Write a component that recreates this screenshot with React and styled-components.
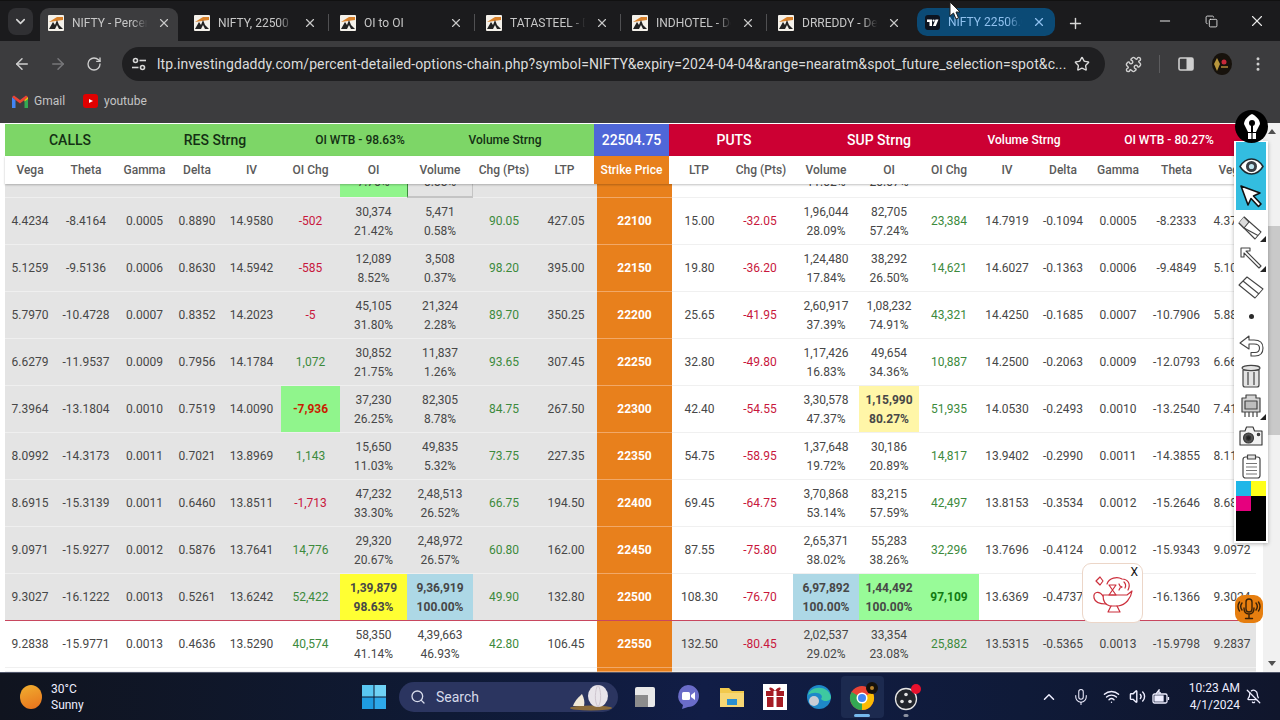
import styled, { createGlobalStyle } from 'styled-components';
import {
	ArrowLeft, ArrowRight, RotateCw, Star, Puzzle, EllipsisVertical, X, Plus, Minus, Copy,
	ChevronDown, ChevronUp, Search, Mic, Wifi, Volume2, BellOff
} from 'lucide-react';

const GlobalStyle = createGlobalStyle`
	html, body {
		margin: 0;
		padding: 0;
		background: #1b1b1d;
	}

	* {
		box-sizing: border-box;
	}
`;

const ROW_COLUMNS = '50px 62px 55px 50px 59px 59px 67px 66px 62px 62px 75px 55px 66px 66px 60px 60px 56px 56px 54px 63px 48px';
const HEAD_COLUMNS = '50px 62px 55px 50px 59px 59px 67px 66px 62px 59px 75px 60px 64px 66px 60px 60px 56px 56px 54px 63px 48px';

const Screen = styled.div`
	position: relative;
	width: 1280px;
	height: 720px;
	overflow: hidden;
	display: flex;
	flex-direction: column;
	font-family: Roboto, "Liberation Sans", sans-serif;
`;

/* browser chrome */

const TabStrip = styled.div`
	height: 41px;
	flex: none;
	display: flex;
	align-items: flex-end;
	padding-left: 8px;
	background: #1b1b1d;
	border-top: 1px solid #111;
`;

const TabSearch = styled.div`
	width: 25px;
	height: 27px;
	margin: 0 7px 6px 0;
	display: flex;
	align-items: center;
	justify-content: center;
	border-radius: 8px;
	background: #303033;
	color: #d8d8d8;
`;

const Tab = styled.div`
	position: relative;
	width: 138px;
	height: 33px;
	margin-right: 8px;
	padding: 0 7px 4px 8px;
	display: flex;
	align-items: center;
	gap: 8px;
	border-radius: 9px 9px 0 0;
	background: ${(props) => props.$active ? '#3c3c3e' : 'transparent'};
	color: #c7c7c7;

	&::after {
		content: '';
		display: ${(props) => props.$sep ? 'block' : 'none'};
		position: absolute;
		right: -5px;
		top: 6px;
		width: 1px;
		height: 17px;
		background: #505052;
	}
`;

const GroupTab = styled(Tab)`
	height: 28px;
	margin: 0 8px 5px 1px;
	padding: 0 9px 0 8px;
	border-radius: 10px;
	background: #0b4a75;
	color: #8fc0ee;
`;

const TabTitle = styled.span`
	flex: 1;
	min-width: 0;
	overflow: hidden;
	white-space: nowrap;
	font-size: 12px;
	mask-image: linear-gradient(to right, #000 78%, transparent 98%);
`;

const NewTab = styled.div`
	width: 24px;
	height: 24px;
	margin-bottom: 6px;
	display: flex;
	align-items: center;
	justify-content: center;
	color: #d8d8d8;
`;

const WindowControls = styled.div`
	margin-left: auto;
	align-self: stretch;
	display: flex;
`;

const WindowButton = styled.div`
	width: 46px;
	display: flex;
	align-items: center;
	justify-content: center;
	color: #e8e8e8;
`;

const Toolbar = styled.div`
	height: 45px;
	flex: none;
	display: flex;
	align-items: center;
	padding: 1px 0 0 4px;
	background: #3c3c3e;
`;

const ToolbarButton = styled.div`
	width: 36px;
	height: 36px;
	flex: none;
	display: flex;
	align-items: center;
	justify-content: center;
	color: ${(props) => props.$dim ? '#77777a' : '#cfcfcf'};
`;

const Address = styled.div`
	width: 983px;
	height: 34px;
	margin: 0 10px 0 10px;
	flex: none;
	display: flex;
	align-items: center;
	padding: 0 15px 0 3px;
	border-radius: 17px;
	background: #1f1f21;
	color: #dcdcdc;
`;

const SiteInfo = styled.div`
	width: 28px;
	height: 28px;
	margin-right: 4px;
	flex: none;
	display: flex;
	align-items: center;
	justify-content: center;
`;

const Url = styled.span`
	flex: 1;
	min-width: 0;
	overflow: hidden;
	white-space: nowrap;
	font-size: 14px;
	letter-spacing: 0.1px;
`;

const ToolbarSep = styled.div`
	width: 17px;
	flex: none;
	display: flex;
	justify-content: center;

	&::before {
		content: '';
		width: 1px;
		height: 18px;
		background: #5c5c5e;
	}
`;

const BookmarksBar = styled.div`
	height: 37px;
	flex: none;
	display: flex;
	align-items: center;
	gap: 18px;
	padding: 0 0 7px 12px;
	background: #3c3c3e;
`;

const Bookmark = styled.div`
	display: flex;
	align-items: center;
	gap: 6px;
	font-size: 12px;
	color: #c4c4c4;
`;

/* option chain */

const Page = styled.div`
	flex: 1;
	min-height: 0;
	display: flex;
	background: #fff;
`;

const Chain = styled.div`
	width: 1263px;
	flex: none;
	display: flex;
	flex-direction: column;
	padding: 1px 5px 0;
	overflow: hidden;
`;

const Banner = styled.div`
	height: 32px;
	flex: none;
	display: grid;
	grid-template-columns: 589px 75px 589px;
`;

const BannerSide = styled.div`
	display: grid;
	grid-template-columns: 130px 160px 130px 160px;
	align-items: center;
	text-align: center;
	font-weight: 500;
	font-size: 12px;
	background: ${(props) => props.$puts ? '#cc0033' : '#7dd667'};
	color: ${(props) => props.$puts ? '#fff' : '#143014'};
`;

const BannerTitle = styled.span`
	font-size: 14px;
`;

const SpotPrice = styled.div`
	display: flex;
	align-items: center;
	justify-content: center;
	font-size: 14px;
	font-weight: 500;
	color: #fff;
	background: #4f67d8;
`;

const HeadRow = styled.div`
	height: 28px;
	flex: none;
	display: grid;
	grid-template-columns: ${HEAD_COLUMNS};
	background: #fff;
	box-shadow: 0 1px 2px rgba(0, 0, 0, 0.25);
	position: relative;
	z-index: 1;
`;

const HeadCell = styled.div`
	display: flex;
	align-items: center;
	justify-content: center;
	white-space: nowrap;
	font-size: 12px;
	font-weight: 500;
	color: ${(props) => props.$strike ? '#fff' : '#5a5a5a'};
	background: ${(props) => props.$strike ? '#e8801c' : 'transparent'};
`;

const Row = styled.div`
	height: ${(props) => props.$height || 47}px;
	flex: none;
	display: grid;
	grid-template-columns: ${ROW_COLUMNS};
`;

const Cell = styled.div`
	display: flex;
	flex-direction: column;
	align-items: center;
	justify-content: ${(props) => props.$clipped ? 'flex-end' : 'center'};
	gap: 4px;
	min-width: 0;
	overflow: hidden;
	white-space: nowrap;
	padding: ${(props) => props.$clipped ? '0 0 7px' : '1px 0 0'};
	font-size: 12px;
	line-height: 15px;
	font-weight: ${(props) => props.$bold ? 700 : 400};
	color: ${(props) => ({ green: '#3c8a3c', red: '#c8173c', strong: '#127a12', alert: '#c81e00' }[props.$tone] || '#474747')};
	background: ${(props) => props.$fill || (props.$shade ? '#e4e4e4' : '#fff')};
	border-bottom: 1px solid ${(props) => props.$atm ? '#c8475f' : (props.$shade ? '#efefef' : '#f0f0f0')};
`;

const StrikeCell = styled(Cell)`
	font-weight: 700;
	color: #fff;
	background: #e8801c;
	border-bottom: 1px solid ${(props) => props.$atm ? '#c8475f' : '#f1a868'};
`;

const HoverCell = styled(Cell)`
	padding-bottom: 6px;
	border-right: 1px solid #c4c4c4;
	border-bottom: 2px solid #c4c4c4;
	border-left: 1px solid #3c8a3c;
`;

/* drawing tools floating on the page */

const PenButton = styled.div`
	position: absolute;
	left: 1235px;
	top: 110px;
	width: 33px;
	height: 33px;
	display: flex;
	align-items: center;
	justify-content: center;
	border-radius: 50%;
	background: #000;
	z-index: 3;
`;

const DrawBar = styled.div`
	position: absolute;
	left: 1234px;
	top: 141px;
	width: 34px;
	height: 402px;
	padding: 1px 2px 0;
	display: flex;
	flex-direction: column;
	background: #fff;
	box-shadow: 0 1px 4px rgba(0, 0, 0, 0.3);
	z-index: 2;
`;

const ActiveTools = styled.div`
	height: 68px;
	margin-bottom: 4px;
	padding-top: 9px;
	background: #33bde0;
`;

const Tool = styled.div`
	position: relative;
	height: ${(props) => props.$height || 29.4}px;
	flex: none;
	display: flex;
	align-items: center;
	justify-content: center;
	color: #2a2a2a;

	&::after {
		content: '';
		display: ${(props) => props.$sub ? 'block' : 'none'};
		position: absolute;
		right: 0;
		bottom: 1px;
		border-style: solid;
		border-width: 0 0 6px 6px;
		border-color: transparent transparent #222 transparent;
	}
`;

const Dot = styled.span`
	width: 5px;
	height: 5px;
	border-radius: 50%;
	background: #2a2a2a;
`;

const Swatches = styled.div`
	flex: 1;
	margin-bottom: 2px;
	display: grid;
	grid-template-columns: 1fr 1fr;
	grid-template-rows: 15px 15px 1fr;
	background: #000;
`;

const Swatch = styled.span`
	background: ${(props) => props.$colour};
`;

const ScrollTrack = styled.div`
	flex: 1;
	position: relative;
	display: flex;
	flex-direction: column;
	justify-content: space-between;
	align-items: center;
	padding: 2px 0 2px;
	background: #f1f1f1;
	color: #555;
`;

const ScrollThumb = styled.div`
	position: absolute;
	left: 0;
	right: 0;
	top: 103px;
	height: 209px;
	background: #c9c9c9;
`;

const Arrow = styled.span`
	width: 0;
	height: 0;
	border-left: 4px solid transparent;
	border-right: 4px solid transparent;
	border-${(props) => props.$down ? 'top' : 'bottom'}: 5px solid #505050;
	margin: 4px 0;
`;

const LampPopup = styled.div`
	position: absolute;
	left: 1082px;
	top: 563px;
	width: 61px;
	height: 60px;
	display: flex;
	align-items: center;
	justify-content: center;
	border: 1px solid #ecd6c8;
	border-radius: 9px;
	background: #fff;
	z-index: 2;
`;

const LampClose = styled.span`
	position: absolute;
	right: 4px;
	top: 1px;
	font-size: 12px;
	color: #111;
`;

const MicBadge = styled.div`
	position: absolute;
	left: 1235px;
	top: 595px;
	width: 28px;
	height: 28px;
	display: flex;
	align-items: center;
	justify-content: center;
	border-radius: 9px;
	background: #e67e0f;
	color: #3a2208;
	z-index: 2;
`;

const MouseCursor = styled.svg`
	position: absolute;
	left: 949px;
	top: 1px;
	z-index: 4;
`;

/* windows taskbar */

const Taskbar = styled.div`
	height: 48px;
	flex: none;
	display: flex;
	align-items: center;
	background: linear-gradient(to right, #10141f 0%, #0f1a35 35%, #111d46 55%, #0f1a38 80%, #10162c 100%);
	border-top: 1px solid #50566a;
	color: #eef;
`;

const Weather = styled.div`
	width: 362px;
	flex: none;
	display: flex;
	align-items: center;
	gap: 9px;
	padding-left: 20px;
	font-size: 12px;
	line-height: 16px;
`;

const Sun = styled.div`
	width: 22px;
	height: 24px;
	border-radius: 50%;
	background: linear-gradient(160deg, #f0b030, #e8701c);
`;

const SearchBox = styled.div`
	width: 219px;
	height: 30px;
	margin: 0 5px 0 13px;
	flex: none;
	display: flex;
	align-items: center;
	gap: 10px;
	padding-left: 11px;
	border-radius: 15px;
	background: #2b3560;
	font-size: 14px;
	color: #d6daea;
`;

const Garlic = styled.svg`
	margin-left: auto;
	margin-right: 5px;
`;

const TaskIcon = styled.div`
	position: relative;
	width: 43.5px;
	height: 42px;
	flex: none;
	display: flex;
	align-items: center;
	justify-content: center;
	border-radius: 4px;
	background: ${(props) => props.$active ? '#1c2a4f' : 'transparent'};

	&::after {
		content: '';
		display: ${(props) => props.$running ? 'block' : 'none'};
		position: absolute;
		bottom: 1px;
		left: 50%;
		width: ${(props) => props.$active ? 16 : 5}px;
		height: 3px;
		transform: translateX(-50%);
		border-radius: 2px;
		background: ${(props) => props.$active ? '#76b9ed' : '#8a90a0'};
	}
`;

const Tray = styled.div`
	margin-left: auto;
	display: flex;
	align-items: center;
	padding-right: 14px;
`;

const TraySlot = styled.div`
	width: ${(props) => props.$width}px;
	display: flex;
	justify-content: center;
	color: #eef;
`;

const Clock = styled.div`
	width: 67px;
	text-align: right;
	font-size: 12px;
	line-height: 17px;
	color: #eef;
`;

const Favicon = () => (
	<svg width="16" height="16" viewBox="0 0 16 16" style={{ flex: 'none' }}>
		<rect width="16" height="16" rx="1" fill="#f4f1ea" />
		<path d="M1 7 L9 2 L15 2 L15 5 L8 6 Z" fill="#d9822b" />
		<path d="M1 14 L5 7 L7 10 L9 5 L11 10 L15 14 L11 14 L9 10 L7 14 Z" fill="#222" />
	</svg>
);

const TvIcon = () => (
	<svg width="15" height="15" viewBox="0 0 15 15" style={{ flex: 'none' }}>
		<rect width="15" height="15" rx="3" fill="#0d1420" />
		<path d="M2 4.5 H7 V11 H4.5 V7 H2 Z" fill="#fff" />
		<circle cx="8.6" cy="5.6" r="1.1" fill="#fff" />
		<path d="M10.5 4.5 H13.5 L10.8 11 H7.9 Z" fill="#fff" />
	</svg>
);

const TuneIcon = () => (
	<svg width="16" height="16" viewBox="0 0 16 16" fill="none" stroke="#d8d8d8" strokeWidth="1.6">
		<circle cx="4.5" cy="4.5" r="2" />
		<path d="M8.5 4.5 H15" />
		<circle cx="11.5" cy="11.5" r="2" />
		<path d="M1 11.5 H7.5" />
	</svg>
);

const SidePanelIcon = () => (
	<svg width="16" height="16" viewBox="0 0 16 16">
		<rect x="1" y="2" width="14" height="12" rx="1.5" fill="none" stroke="#cfcfcf" strokeWidth="1.6" />
		<rect x="8.5" y="2" width="6.5" height="12" fill="#cfcfcf" />
	</svg>
);

const AvatarIcon = () => (
	<svg width="20" height="24" viewBox="0 0 20 24">
		<ellipse cx="10" cy="12" rx="10" ry="11" fill="#17120c" />
		<path d="M5 6 L8 12 L5 19 L2 12 Z" fill="#b8963c" />
		<circle cx="12" cy="10" r="2.5" fill="#c8283a" />
		<rect x="9" y="14" width="7" height="2" fill="#8a6a2c" />
	</svg>
);

const GmailIcon = () => (
	<svg width="16" height="13" viewBox="0 0 16 13">
		<path d="M0 2 V13 H3.5 V5 Z" fill="#4285f4" />
		<path d="M12.5 5 V13 H16 V2 Z" fill="#34a853" />
		<path d="M0 2 L2 0.5 L8 5 L14 0.5 L16 2 L12.5 5 L8 8.5 L3.5 5 Z" fill="#ea4335" />
		<path d="M12.5 5 L16 2 V4 L12.5 6.5 Z" fill="#fbbc04" />
	</svg>
);

const YoutubeIcon = () => (
	<svg width="15" height="14" viewBox="0 0 15 14">
		<rect width="15" height="14" rx="3" fill="#e00000" />
		<path d="M6 5 L10 7 L6 9 Z" fill="#fff" />
	</svg>
);

const PenIcon = () => (
	<svg width="20" height="26" viewBox="0 0 20 26" fill="#fff">
		<path d="M10 0 C6 2 2 6 2 10 L6 18 H14 L18 10 C18 6 14 2 10 0 Z" />
		<circle cx="10" cy="9" r="3" fill="#000" />
		<rect x="9" y="11" width="2" height="7" fill="#000" />
		<rect x="6" y="19" width="3.4" height="6" />
		<rect x="10.6" y="19" width="3.4" height="6" />
	</svg>
);

const EyeIcon = () => (
	<svg width="25" height="17" viewBox="0 0 25 17">
		<path d="M1 8.5 C5 2 9 1 12.5 1 C16 1 20 2 24 8.5 C20 15 16 16 12.5 16 C9 16 5 15 1 8.5 Z" fill="#fff" stroke="#1c2a30" strokeWidth="1.5" />
		<circle cx="12.5" cy="8.5" r="5.5" fill="#3a3f46" />
		<circle cx="12.5" cy="8.5" r="2.6" fill="#bfe4ef" />
	</svg>
);

const CursorIcon = () => (
	<svg width="24" height="24" viewBox="0 0 24 24">
		<path d="M2 2 L21 9 L14.5 12 L22 20 L19.5 22.5 L12 14.5 L9 21 Z" fill="#fff" stroke="#111" strokeWidth="1.6" strokeLinejoin="round" />
	</svg>
);

const MarkerIcon = () => (
	<svg width="26" height="26" viewBox="0 0 26 26" fill="#fff" stroke="#444" strokeWidth="1.1" strokeLinejoin="round">
		<path d="M1 7 L6 1 L23 16 L17 23 Z" />
		<path d="M1 7 L6 12 L11 6 L6 1" fill="#dcdcdc" />
		<path d="M6 12 L20 19.5" />
	</svg>
);

const ArrowToolIcon = () => (
	<svg width="24" height="24" viewBox="0 0 24 24" fill="#fff" stroke="#444" strokeWidth="1.1" strokeLinejoin="round">
		<path d="M2 2 H11 V5 H7 L22 20 L20 22 L5 7 V11 H2 Z" />
	</svg>
);

const EraserIcon = () => (
	<svg width="26" height="24" viewBox="0 0 26 24" fill="#fff" stroke="#444" strokeWidth="1.1" strokeLinejoin="round">
		<path d="M1 10 L9 2 L25 14 L17 23 Z" />
		<path d="M5 6 L21 19" />
	</svg>
);

const UndoIcon = () => (
	<svg width="25" height="22" viewBox="0 0 25 22" fill="#fff" stroke="#444" strokeWidth="1.1" strokeLinejoin="round">
		<path d="M1 8 L10 1 V5 H15 C21 5 24 8 24 13 C24 18 21 21 16 21 H12 V17.5 H16 C19 17.5 20.5 15.5 20.5 13 C20.5 10 19 9 15 9 H10 V14 Z" />
	</svg>
);

const TrashIcon = () => (
	<svg width="20" height="24" viewBox="0 0 20 24" fill="#e4e4e4" stroke="#444" strokeWidth="1.2" strokeLinejoin="round">
		<path d="M2 6 H18 V21 Q18 23 16 23 H4 Q2 23 2 21 Z" />
		<ellipse cx="10" cy="4" rx="9" ry="2.6" />
		<path d="M7 8 V21 M13 8 V21" fill="none" />
	</svg>
);

const MagnetIcon = () => (
	<svg width="22" height="24" viewBox="0 0 22 24" fill="#d4d4d4" stroke="#444" strokeWidth="1.2" strokeLinejoin="round">
		<path d="M2 4 H6 V1 H16 V4 H20 V18 H2 Z" />
		<path d="M5 18 V23 M9 18 V23 M13 18 V23 M17 18 V23" fill="none" />
		<rect x="5" y="7" width="12" height="8" fill="#bdbdbd" />
	</svg>
);

const CameraIcon = () => (
	<svg width="24" height="20" viewBox="0 0 24 20" fill="#f2f2f2" stroke="#333" strokeWidth="1.1" strokeLinejoin="round">
		<path d="M1 5 H6 L7.5 1 H14 L15.5 5 H23 V19 H1 Z" />
		<circle cx="9.5" cy="12" r="5" fill="#555" />
		<circle cx="9.5" cy="12" r="2.2" fill="#222" />
		<circle cx="19.5" cy="8.5" r="1.2" fill="#444" />
	</svg>
);

const ClipboardIcon = () => (
	<svg width="19" height="25" viewBox="0 0 19 25" fill="#fff" stroke="#444" strokeWidth="1.2" strokeLinejoin="round">
		<rect x="1" y="3" width="17" height="21" rx="2.5" />
		<rect x="5.5" y="1" width="8" height="4" fill="#e4e4e4" />
		<path d="M4 9.5 H15 M4 13 H15 M4 16.5 H15 M4 20 H15" stroke="#777" fill="none" />
	</svg>
);

const LampIcon = () => (
	<svg width="44" height="44" viewBox="0 0 44 44" fill="none" stroke="#cc2f3c" strokeWidth="1.2" strokeLinejoin="round" strokeLinecap="round">
		<path d="M12 24 H36 L41 20 C40 27 35 34 27 35 H19 C14 34 12 29 12 24 Z" />
		<path d="M12 25 C8 19 2 21 3 27 C4 31 9 33 15 33" />
		<path d="M20 35 L17 41 H29 L26 35 M17 41 H29" />
		<path d="M18 14 H25 L21.5 19 L25 24 H18 L21.5 19 Z" />
		<path d="M16 13 C18 7 26 5 31 8 C37 8 40 13 37 19" />
		<path d="M9 6 L12 10 L9 14 L5 10 Z" />
		<path d="M28 13 L29 15 L31 16 L29 17 L28 19 M33 11 C35 13 35 15 34 17" />
	</svg>
);

const BadgeMicIcon = () => (
	<svg width="24" height="24" viewBox="0 0 24 24" fill="none" stroke="currentColor" strokeWidth="1.4" strokeLinecap="round">
		<rect x="9" y="2" width="6" height="13" rx="3" />
		<path d="M7 11 C7 15 9 17 12 17 C15 17 17 15 17 11 M12 17 V21 M8.5 21.5 H15.5" />
		<path d="M5 6 C3.5 8 3.5 11 5 13 M19 6 C20.5 8 20.5 11 19 13 M2.5 5 C0.5 8 0.5 11 2.5 14 M21.5 5 C23.5 8 23.5 11 21.5 14" />
	</svg>
);

const WindowsLogo = () => (
	<svg width="24" height="24" viewBox="0 0 24 24" style={{ flex: 'none' }}>
		<rect width="11.5" height="11.5" fill="#59c7f2" />
		<rect x="12.5" width="11.5" height="11.5" fill="#6fd2f5" />
		<rect y="12.5" width="11.5" height="11.5" fill="#1e9be0" />
		<rect x="12.5" y="12.5" width="11.5" height="11.5" fill="#2ea9ea" />
	</svg>
);

const GarlicIcon = () => (
	<Garlic width="46" height="30" viewBox="0 0 46 30">
		<ellipse cx="24" cy="26" rx="21" ry="2.6" fill="#8a6a3a" />
		<ellipse cx="31" cy="14" rx="10" ry="11" fill="#e8e4ea" />
		<path d="M31 3 C28 7 27 20 31 25 M31 3 C34 7 35 20 31 25" fill="none" stroke="#cfc6d0" />
		<path d="M6 24 C8 18 13 14 15 12 C17 16 18 20 17 24 Z" fill="#f0e8d8" />
	</Garlic>
);

const FilesIcon = () => (
	<svg width="22" height="24" viewBox="0 0 22 24">
		<rect x="1" y="2" width="20" height="20" rx="2" fill="#e8e8e8" />
		<rect x="1" y="10" width="13" height="12" fill="#8c8c8c" />
	</svg>
);

const MeetIcon = () => (
	<svg width="24" height="26" viewBox="0 0 24 26">
		<path d="M12 1 A11 11 0 1 1 12 23 L6 25 L7 21 A11 11 0 0 1 12 1 Z" fill="#6a6cc8" />
		<rect x="6" y="8" width="8" height="8" rx="1.5" fill="#fff" />
		<path d="M15 11 L19 8 V16 L15 13 Z" fill="#fff" />
	</svg>
);

const FolderIcon = () => (
	<svg width="26" height="24" viewBox="0 0 26 24">
		<path d="M1 3 H10 L13 6 H25 V22 H1 Z" fill="#f2c94c" />
		<rect x="1" y="8" width="24" height="14" fill="#f7d774" />
		<rect x="8" y="14" width="10" height="6" fill="#2a8fd0" />
	</svg>
);

const GiftIcon = () => (
	<svg width="24" height="26" viewBox="0 0 24 26">
		<rect width="24" height="26" fill="#fff" />
		<rect x="3" y="7" width="18" height="5" fill="#a51c24" />
		<rect x="4" y="13" width="16" height="10" fill="#a51c24" />
		<rect x="10.5" y="7" width="3" height="16" fill="#fff" />
		<path d="M12 7 C8 1 4 4 8 7 Z M12 7 C16 1 20 4 16 7 Z" fill="#a51c24" />
	</svg>
);

const EdgeIcon = () => (
	<svg width="26" height="26" viewBox="0 0 26 26">
		<circle cx="13" cy="13" r="12" fill="#1e88c8" />
		<path d="M2 11 C4 2 22 0 25 13 C25 18 17 18 15 15 C19 10 9 6 2 11 Z" fill="#3ec9a0" />
		<circle cx="8" cy="17" r="5" fill="#c8ccd4" />
	</svg>
);

const ChromeIcon = () => (
	<svg width="32" height="32" viewBox="0 0 32 32">
		<circle cx="16" cy="17" r="12" fill="#ea4335" />
		<path d="M16 17 L5.6 11 A12 12 0 0 0 16 29 Z" fill="#34a853" />
		<path d="M16 17 L26.4 11 A12 12 0 0 1 16 29 Z" fill="#fbbc04" />
		<circle cx="16" cy="17" r="5.5" fill="#fff" />
		<circle cx="16" cy="17" r="4" fill="#4285f4" />
		<circle cx="26" cy="7" r="6" fill="#15110c" />
		<circle cx="26" cy="7" r="2" fill="#b8822c" />
	</svg>
);

const ObsIcon = () => (
	<svg width="30" height="28" viewBox="0 0 30 28">
		<circle cx="15" cy="16" r="10.5" fill="#22252c" stroke="#e4e4e4" strokeWidth="1.3" />
		<circle cx="15" cy="11.5" r="1.8" fill="#e4e4e4" />
		<circle cx="11" cy="18.5" r="1.8" fill="#e4e4e4" />
		<circle cx="19" cy="18.5" r="1.8" fill="#e4e4e4" />
		<circle cx="25" cy="6" r="5" fill="#e8112d" />
	</svg>
);

const BatteryIcon = () => (
	<svg width="18" height="16" viewBox="0 0 18 16" fill="none" stroke="#eef" strokeWidth="1.3">
		<rect x="1" y="5" width="14" height="9" rx="1.5" />
		<rect x="3" y="7" width="8" height="5" fill="#eef" />
		<path d="M16.5 8 V11 M4 5 L7 1 V4 H9" />
	</svg>
);

const rows = [
	{ strike: '22100', call: ['4.4234', '-8.4164', '0.0005', '0.8890', '14.9580'], cChg: '-502', cOi: ['30,374', '21.42%'], cVol: ['5,471', '0.58%'], cPts: '90.05', cLtp: '427.05', pLtp: '15.00', pPts: '-32.05', pVol: ['1,96,044', '28.09%'], pOi: ['82,705', '57.24%'], pChg: '23,384', put: ['14.7919', '-0.1094', '0.0005', '-8.2333', '4.3708'] },
	{ strike: '22150', call: ['5.1259', '-9.5136', '0.0006', '0.8630', '14.5942'], cChg: '-585', cOi: ['12,089', '8.52%'], cVol: ['3,508', '0.37%'], cPts: '98.20', cLtp: '395.00', pLtp: '19.80', pPts: '-36.20', pVol: ['1,24,480', '17.84%'], pOi: ['38,292', '26.50%'], pChg: '14,621', put: ['14.6027', '-0.1363', '0.0006', '-9.4849', '5.1016'] },
	{ strike: '22200', call: ['5.7970', '-10.4728', '0.0007', '0.8352', '14.2023'], cChg: '-5', cOi: ['45,105', '31.80%'], cVol: ['21,324', '2.28%'], cPts: '89.70', cLtp: '350.25', pLtp: '25.65', pPts: '-41.95', pVol: ['2,60,917', '37.39%'], pOi: ['1,08,232', '74.91%'], pChg: '43,321', put: ['14.4250', '-0.1685', '0.0007', '-10.7906', '5.8812'] },
	{ strike: '22250', call: ['6.6279', '-11.9537', '0.0009', '0.7956', '14.1784'], cChg: '1,072', cOi: ['30,852', '21.75%'], cVol: ['11,837', '1.26%'], cPts: '93.65', cLtp: '307.45', pLtp: '32.80', pPts: '-49.80', pVol: ['1,17,426', '16.83%'], pOi: ['49,654', '34.36%'], pChg: '10,887', put: ['14.2500', '-0.2063', '0.0009', '-12.0793', '6.6604'] },
	{ strike: '22300', call: ['7.3964', '-13.1804', '0.0010', '0.7519', '14.0090'], cChg: '-7,936', cChgFill: '#90f58c', cOi: ['37,230', '26.25%'], cVol: ['82,305', '8.78%'], cPts: '84.75', cLtp: '267.50', pLtp: '42.40', pPts: '-54.55', pVol: ['3,30,578', '47.37%'], pOi: ['1,15,990', '80.27%'], pOiFill: '#fff6a8', pChg: '51,935', put: ['14.0530', '-0.2493', '0.0010', '-13.2540', '7.4122'] },
	{ strike: '22350', call: ['8.0992', '-14.3173', '0.0011', '0.7021', '13.8969'], cChg: '1,143', cOi: ['15,650', '11.03%'], cVol: ['49,835', '5.32%'], cPts: '73.75', cLtp: '227.35', pLtp: '54.75', pPts: '-58.95', pVol: ['1,37,648', '19.72%'], pOi: ['30,186', '20.89%'], pChg: '14,817', put: ['13.9402', '-0.2990', '0.0011', '-14.3855', '8.1103'] },
	{ strike: '22400', call: ['8.6915', '-15.3139', '0.0011', '0.6460', '13.8511'], cChg: '-1,713', cOi: ['47,232', '33.30%'], cVol: ['2,48,513', '26.52%'], cPts: '66.75', cLtp: '194.50', pLtp: '69.45', pPts: '-64.75', pVol: ['3,70,868', '53.14%'], pOi: ['83,215', '57.59%'], pChg: '42,497', put: ['13.8153', '-0.3534', '0.0012', '-15.2646', '8.6807'] },
	{ strike: '22450', call: ['9.0971', '-15.9277', '0.0012', '0.5876', '13.7641'], cChg: '14,776', cOi: ['29,320', '20.67%'], cVol: ['2,48,972', '26.57%'], cPts: '60.80', cLtp: '162.00', pLtp: '87.55', pPts: '-75.80', pVol: ['2,65,371', '38.02%'], pOi: ['55,283', '38.26%'], pChg: '32,296', put: ['13.7696', '-0.4124', '0.0012', '-15.9343', '9.0972'] },
	{ strike: '22500', atm: true, call: ['9.3027', '-16.1222', '0.0013', '0.5261', '13.6242'], cChg: '52,422', cOi: ['1,39,879', '98.63%'], cOiFill: '#ffff33', cVol: ['9,36,919', '100.00%'], cVolFill: '#add8e6', cPts: '49.90', cLtp: '132.80', pLtp: '108.30', pPts: '-76.70', pVol: ['6,97,892', '100.00%'], pVolFill: '#add8e6', pOi: ['1,44,492', '100.00%'], pOiFill: '#98fb98', pChg: '97,109', pChgFill: '#98fb98', put: ['13.6369', '-0.4737', '0.0013', '-16.1366', '9.3024'] },
	{ strike: '22550', call: ['9.2838', '-15.9771', '0.0013', '0.4636', '13.5290'], cChg: '40,574', cOi: ['58,350', '41.14%'], cVol: ['4,39,663', '46.93%'], cPts: '42.80', cLtp: '106.45', pLtp: '132.50', pPts: '-80.45', pVol: ['2,02,537', '29.02%'], pOi: ['33,354', '23.08%'], pChg: '25,882', put: ['13.5315', '-0.5365', '0.0013', '-15.9798', '9.2837'] }
];

const callHeads = ['Vega', 'Theta', 'Gamma', 'Delta', 'IV', 'OI Chg', 'OI', 'Volume', 'Chg (Pts)', 'LTP'];
const putHeads = ['LTP', 'Chg (Pts)', 'Volume', 'OI', 'OI Chg', 'IV', 'Delta', 'Gamma', 'Theta', 'Vega'];
const tabs = ['NIFTY - Percent Detailed', 'NIFTY, 22500', 'OI to OI', 'TATASTEEL - Detail', 'INDHOTEL - Detail', 'DRREDDY - Detail'];

const toneOf = (value) => (value.startsWith('-') ? 'red' : 'green');

const Pair = ({ value }) => (
	<>
		<span>{value[0]}</span>
		<span>{value[1]}</span>
	</>
);

const ChainRow = ({ data }) => {
	const { strike, atm } = data;
	const itmCall = Number(strike) <= 22500;
	const call = { $shade: itmCall, $atm: atm };
	const put = { $shade: !itmCall, $atm: atm };

	return (
		<Row>
			{data.call.map((value, i) => <Cell key={i} {...call}>{value}</Cell>)}
			<Cell
				{...call}
				$fill={data.cChgFill}
				$bold={!!data.cChgFill}
				$tone={data.cChgFill ? 'alert' : toneOf(data.cChg)}
			>
				{data.cChg}
			</Cell>
			<Cell {...call} $fill={data.cOiFill} $bold={!!data.cOiFill}><Pair value={data.cOi} /></Cell>
			<Cell {...call} $fill={data.cVolFill} $bold={!!data.cVolFill}><Pair value={data.cVol} /></Cell>
			<Cell {...call} $tone="green">{data.cPts}</Cell>
			<Cell {...call}>{data.cLtp}</Cell>
			<StrikeCell $atm={atm}>{strike}</StrikeCell>
			<Cell {...put}>{data.pLtp}</Cell>
			<Cell {...put} $tone="red">{data.pPts}</Cell>
			<Cell {...put} $fill={data.pVolFill} $bold={!!data.pVolFill}><Pair value={data.pVol} /></Cell>
			<Cell {...put} $fill={data.pOiFill} $bold={!!data.pOiFill}><Pair value={data.pOi} /></Cell>
			<Cell {...put} $fill={data.pChgFill} $bold={!!data.pChgFill} $tone={data.pChgFill ? 'strong' : 'green'}>{data.pChg}</Cell>
			{data.put.map((value, i) => <Cell key={i} {...put}>{value}</Cell>)}
		</Row>
	);
};

// the row the table has scrolled past, only its last line still shows
const ClippedRow = () => (
	<Row $height={14}>
		{callHeads.map((head, i) => {
			if (head === 'OI') return <Cell key={i} $clipped $fill="#90f58c">7.76%</Cell>;
			if (head === 'Volume') return <HoverCell key={i} $clipped $shade>0.55%</HoverCell>;
			return <Cell key={i} $shade />;
		})}
		<StrikeCell />
		{putHeads.map((head, i) => {
			if (head === 'Volume') return <Cell key={i} $clipped>11.02%</Cell>;
			if (head === 'OI') return <Cell key={i} $clipped>20.07%</Cell>;
			return <Cell key={i} />;
		})}
	</Row>
);

const TailRow = () => (
	<Row $height={4}>
		{callHeads.map((head, i) => <Cell key={i} />)}
		<StrikeCell />
		{putHeads.map((head, i) => <Cell key={i} $shade />)}
	</Row>
);

const App = () => (
	<Screen>
		<GlobalStyle />

		<TabStrip>
			<TabSearch><ChevronDown size={15} strokeWidth={2.5} /></TabSearch>
			{tabs.map((title, i) => (
				<Tab key={title} $active={i === 0} $sep={i > 0 && i < 5}>
					<Favicon />
					<TabTitle>{title}</TabTitle>
					<X size={14} strokeWidth={2} />
				</Tab>
			))}
			<GroupTab>
				<TvIcon />
				<TabTitle>NIFTY 22506.05</TabTitle>
				<X size={14} strokeWidth={2} />
			</GroupTab>
			<NewTab><Plus size={17} /></NewTab>
			<WindowControls>
				<WindowButton><Minus size={16} strokeWidth={1.5} /></WindowButton>
				<WindowButton><Copy size={13} strokeWidth={1.6} /></WindowButton>
				<WindowButton><X size={18} strokeWidth={1.5} /></WindowButton>
			</WindowControls>
		</TabStrip>

		<Toolbar>
			<ToolbarButton><ArrowLeft size={18} /></ToolbarButton>
			<ToolbarButton $dim><ArrowRight size={18} /></ToolbarButton>
			<ToolbarButton><RotateCw size={16} /></ToolbarButton>
			<Address>
				<SiteInfo><TuneIcon /></SiteInfo>
				<Url>ltp.investingdaddy.com/percent-detailed-options-chain.php?symbol=NIFTY&amp;expiry=2024-04-04&amp;range=nearatm&amp;spot_future_selection=spot&amp;c...</Url>
				<Star size={16} color="#dcdcdc" strokeWidth={2} />
			</Address>
			<ToolbarButton><Puzzle size={17} /></ToolbarButton>
			<ToolbarSep />
			<ToolbarButton><SidePanelIcon /></ToolbarButton>
			<ToolbarButton><AvatarIcon /></ToolbarButton>
			<ToolbarButton><EllipsisVertical size={18} /></ToolbarButton>
		</Toolbar>

		<BookmarksBar>
			<Bookmark><GmailIcon />Gmail</Bookmark>
			<Bookmark><YoutubeIcon />youtube</Bookmark>
		</BookmarksBar>

		<Page>
			<Chain>
				<Banner>
					<BannerSide>
						<BannerTitle>CALLS</BannerTitle>
						<BannerTitle>RES Strng</BannerTitle>
						<span>OI WTB - 98.63%</span>
						<span>Volume Strng</span>
					</BannerSide>
					<SpotPrice>22504.75</SpotPrice>
					<BannerSide $puts>
						<BannerTitle>PUTS</BannerTitle>
						<BannerTitle>SUP Strng</BannerTitle>
						<span>Volume Strng</span>
						<span>OI WTB - 80.27%</span>
					</BannerSide>
				</Banner>
				<HeadRow>
					{callHeads.map((head) => <HeadCell key={head}>{head}</HeadCell>)}
					<HeadCell $strike>Strike Price</HeadCell>
					{putHeads.map((head) => <HeadCell key={head}>{head}</HeadCell>)}
				</HeadRow>
				<ClippedRow />
				{rows.map((row) => <ChainRow key={row.strike} data={row} />)}
				<TailRow />
			</Chain>
			<ScrollTrack>
				<ScrollThumb />
				<Arrow />
				<Arrow $down />
			</ScrollTrack>
		</Page>

		<Taskbar>
			<Weather>
				<Sun />
				<div>30°C<br />Sunny</div>
			</Weather>
			<WindowsLogo />
			<SearchBox>
				<Search size={16} />
				Search
				<GarlicIcon />
			</SearchBox>
			<TaskIcon><FilesIcon /></TaskIcon>
			<TaskIcon><MeetIcon /></TaskIcon>
			<TaskIcon><FolderIcon /></TaskIcon>
			<TaskIcon><GiftIcon /></TaskIcon>
			<TaskIcon><EdgeIcon /></TaskIcon>
			<TaskIcon $active $running><ChromeIcon /></TaskIcon>
			<TaskIcon $running><ObsIcon /></TaskIcon>
			<Tray>
				<TraySlot $width={32}><ChevronUp size={18} /></TraySlot>
				<TraySlot $width={32}><Mic size={18} strokeWidth={1.4} /></TraySlot>
				<TraySlot $width={28}><Wifi size={17} /></TraySlot>
				<TraySlot $width={24}><Volume2 size={17} /></TraySlot>
				<TraySlot $width={24}><BatteryIcon /></TraySlot>
				<Clock>10:23 AM<br />4/1/2024</Clock>
				<TraySlot $width={26}><BellOff size={15} /></TraySlot>
			</Tray>
		</Taskbar>

		<PenButton><PenIcon /></PenButton>
		<DrawBar>
			<ActiveTools>
				<Tool $height={30}><EyeIcon /></Tool>
				<Tool $height={30}><CursorIcon /></Tool>
			</ActiveTools>
			<Tool $sub><MarkerIcon /></Tool>
			<Tool $sub><ArrowToolIcon /></Tool>
			<Tool><EraserIcon /></Tool>
			<Tool><Dot /></Tool>
			<Tool><UndoIcon /></Tool>
			<Tool><TrashIcon /></Tool>
			<Tool $sub $height={30.5}><MagnetIcon /></Tool>
			<Tool $height={31}><CameraIcon /></Tool>
			<Tool><ClipboardIcon /></Tool>
			<Swatches>
				<Swatch $colour="#1fb6e8" />
				<Swatch $colour="#ffff1a" />
				<Swatch $colour="#e6007e" />
			</Swatches>
		</DrawBar>

		<LampPopup>
			<LampClose>X</LampClose>
			<LampIcon />
		</LampPopup>
		<MicBadge><BadgeMicIcon /></MicBadge>

		<MouseCursor width="12" height="19" viewBox="0 0 12 19">
			<path d="M1 1 V15 L4.5 12 L7 18 L9.5 17 L7 11 H11 Z" fill="#fff" stroke="#222" strokeWidth="1" />
		</MouseCursor>
	</Screen>
);

export default App;
